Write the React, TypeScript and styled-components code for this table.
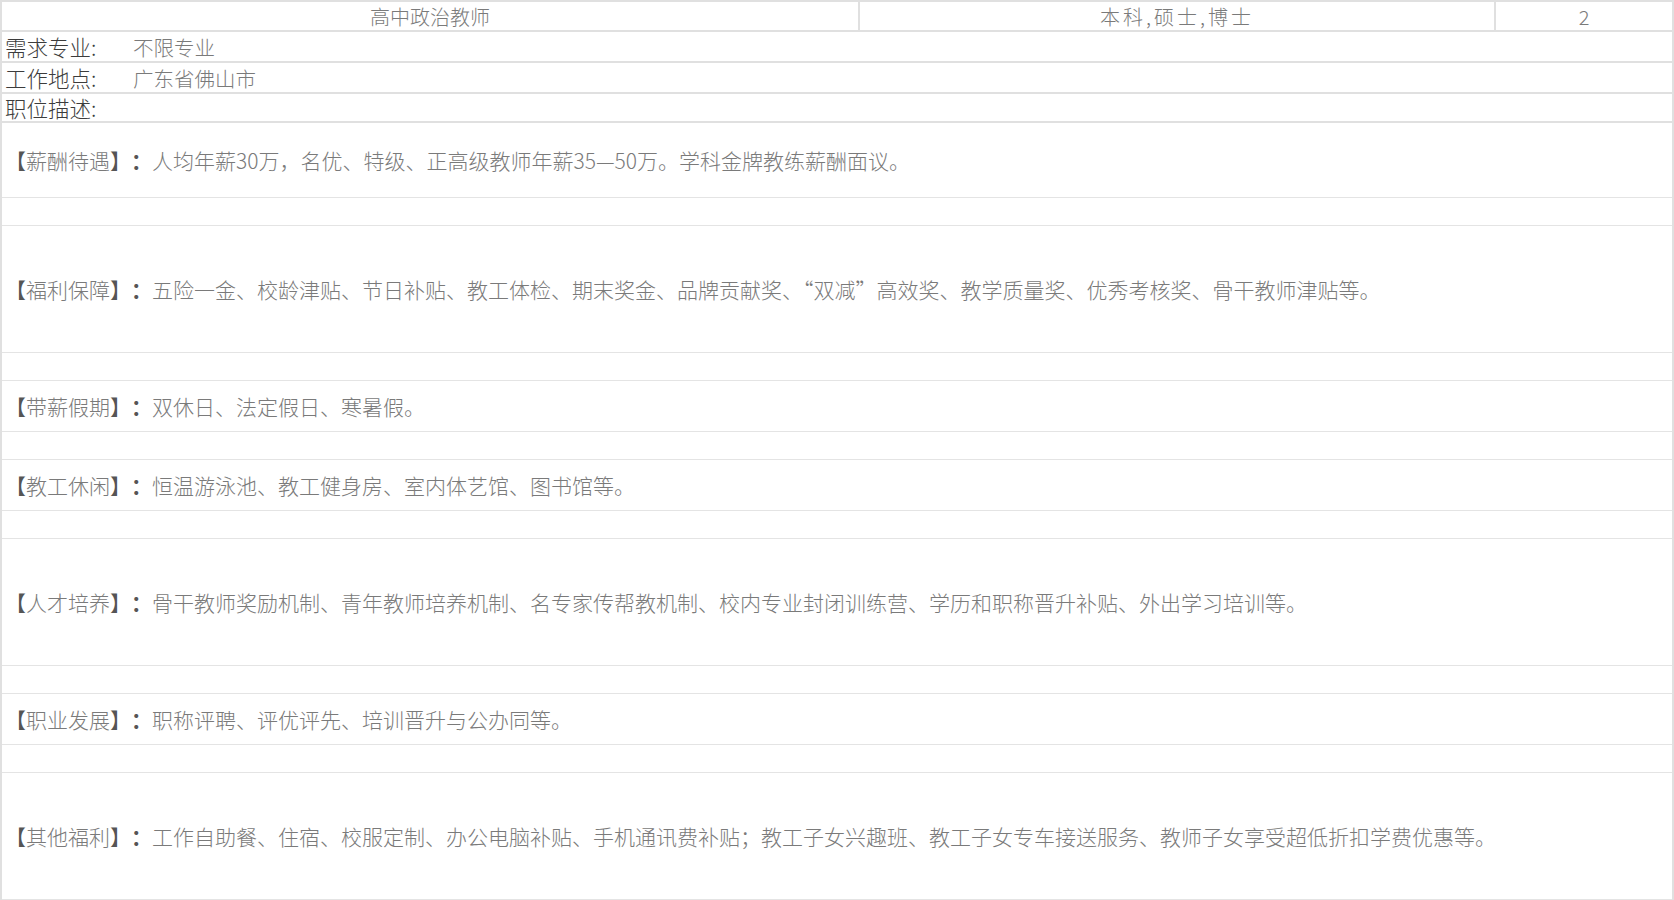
import React from "react";
import styled, { createGlobalStyle } from "styled-components";

const GlobalStyle = createGlobalStyle`
  html, body {
    margin: 0;
    padding: 0;
    background: #ffffff;
  }
  body {
    font-family: "Noto Sans CJK SC", "Noto Sans", sans-serif;
  }
`;

const Sheet = styled.table`
  width: 1674px;
  border-collapse: collapse;
  table-layout: fixed;
  font-family: "Noto Sans CJK SC", "Noto Sans", sans-serif;
  font-weight: 300;
  color: #777777;
  border-left: 2px solid #e0e0e0;
  border-right: 2px solid #e0e0e0;
`;

const HeadCell = styled.td<{ $spaced?: boolean }>`
  height: 27px;
  padding: 1px 0 0 0;
  border: 2px solid #e0e0e0;
  text-align: center;
  vertical-align: middle;
  font-size: 20px;
  line-height: 1;
  color: #7a7a7a;
  letter-spacing: ${(p) => (p.$spaced ? "3px" : "0")};
`;

const InfoCell = styled.td<{ $h: number }>`
  height: ${(p) => p.$h - 1}px;
  padding: 1px 0 0 3px;
  border: 2px solid #e0e0e0;
  vertical-align: middle;
  font-size: 21.5px;
  line-height: 1;
`;

const InfoLine = styled.div`
  display: flex;
  align-items: center;
`;

const Label = styled.span`
  width: 128px;
  flex: none;
  color: #3c3c3c;
`;

const Value = styled.span`
  color: #7a7a7a;
  font-size: 20.5px;
`;

const DescCell = styled.td<{ $h: number }>`
  height: ${(p) => p.$h}px;
  padding: 2px 0 0 3px;
  box-sizing: border-box;
  border-top: 1px solid #e4e4e4;
  border-bottom: 1px solid #e4e4e4;
  vertical-align: middle;
  font-size: 21px;
  line-height: 1;
  color: #7a7a7a;
  white-space: nowrap;
`;

const Bracket = styled.span`
  color: #555555;
  font-weight: 400;
`;

const Colon = styled.span`
  display: inline-block;
  width: 1em;
  text-align: center;
  color: #555555;
  font-weight: 700;
`;

type Item = { title: string; text: string; h: number };

const items: Item[] = [
  { title: "薪酬待遇", text: "人均年薪30万，名优、特级、正高级教师年薪35—50万。学科金牌教练薪酬面议。", h: 75 },
  { title: "福利保障", text: "五险一金、校龄津贴、节日补贴、教工体检、期末奖金、品牌贡献奖、“双减”高效奖、教学质量奖、优秀考核奖、骨干教师津贴等。", h: 127 },
  { title: "带薪假期", text: "双休日、法定假日、寒暑假。", h: 51 },
  { title: "教工休闲", text: "恒温游泳池、教工健身房、室内体艺馆、图书馆等。", h: 51 },
  { title: "人才培养", text: "骨干教师奖励机制、青年教师培养机制、名专家传帮教机制、校内专业封闭训练营、学历和职称晋升补贴、外出学习培训等。", h: 127 },
  { title: "职业发展", text: "职称评聘、评优评先、培训晋升与公办同等。", h: 51 },
  { title: "其他福利", text: "工作自助餐、住宿、校服定制、办公电脑补贴、手机通讯费补贴；教工子女兴趣班、教工子女专车接送服务、教师子女享受超低折扣学费优惠等。", h: 127 },
];

export default function App() {
  return (
    <>
      <GlobalStyle />
      <Sheet>
        <colgroup>
          <col style={{ width: 858 }} />
          <col style={{ width: 636 }} />
          <col />
        </colgroup>
        <tbody>
          <tr>
            <HeadCell>高中政治教师</HeadCell>
            <HeadCell $spaced>本科,硕士,博士</HeadCell>
            <HeadCell>2</HeadCell>
          </tr>
          <tr>
            <InfoCell colSpan={3} $h={29}>
              <InfoLine>
                <Label>需求专业:</Label>
                <Value>不限专业</Value>
              </InfoLine>
            </InfoCell>
          </tr>
          <tr>
            <InfoCell colSpan={3} $h={29}>
              <InfoLine>
                <Label>工作地点:</Label>
                <Value>广东省佛山市</Value>
              </InfoLine>
            </InfoCell>
          </tr>
          <tr>
            <InfoCell colSpan={3} $h={27}>
              <InfoLine>
                <Label>职位描述:</Label>
              </InfoLine>
            </InfoCell>
          </tr>
          {items.map((it, i) => (
            <React.Fragment key={it.title}>
              {i > 0 && (
                <tr>
                  <DescCell colSpan={3} $h={28} />
                </tr>
              )}
              <tr>
                <DescCell colSpan={3} $h={it.h}>
                  <Bracket>【</Bracket>
                  {it.title}
                  <Bracket>】</Bracket>
                  <Colon>：</Colon>
                  {it.text}
                </DescCell>
              </tr>
            </React.Fragment>
          ))}
        </tbody>
      </Sheet>
    </>
  );
}
